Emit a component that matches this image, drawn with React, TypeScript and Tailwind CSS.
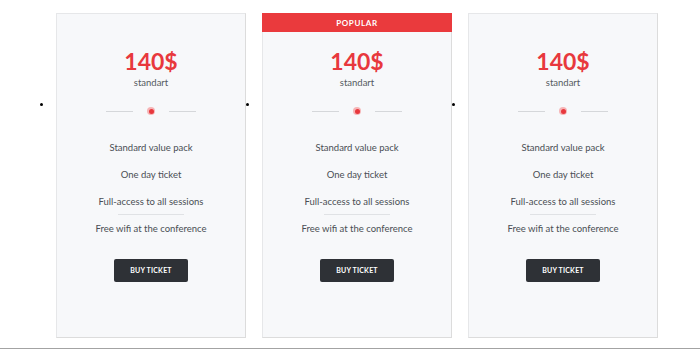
const features = [
  'Standard value pack',
  'One day ticket',
  'Full-access to all sessions',
  'Free wifi at the conference',
]

function PriceCard({ popular }: { popular?: boolean }) {
  return (
    <div className="relative w-[190px] h-[325px] bg-[#f7f8fa] border border-[#e6e7e9] border-r-[#dcdcdc] border-b-[#dcdcdc]">
      <span className="absolute left-[-17px] top-[89px] w-[3px] h-[3px] rounded-full bg-black" />
      {popular && (
        <div className="absolute left-[-1px] right-[-1px] top-[-1px] h-[19px] bg-[#ea3a3d] flex items-center justify-center text-white text-[8px] font-bold tracking-[0.08em]">
          POPULAR
        </div>
      )}
      <div className="flex flex-col items-center pt-[34px]">
        <div className="text-[#e8383d] text-[23px] font-bold leading-[26px]">140$</div>
        <div className="text-[#555a60] text-[9.5px] leading-[14px] mt-[2px]">standart</div>
        <div className="flex items-center gap-[14px] mt-[17px]">
          <span className="w-[27px] h-px bg-[#d5d7da]" />
          <span className="w-[8px] h-[8px] rounded-full bg-[#f6b5b7] flex items-center justify-center">
            <span className="w-[5px] h-[5px] rounded-full bg-[#e8383d]" />
          </span>
          <span className="w-[27px] h-px bg-[#d5d7da]" />
        </div>
        <ul className="flex flex-col items-center mt-[19px] text-[#4a4e54] text-[9.5px]">
          {features.map((f, i) => (
            <li key={f} className="flex flex-col items-center">
              <span className="leading-[27px]">{f}</span>
              {i === 2 && <span className="w-[66px] h-px bg-[#e0e2e5] -mt-[1px]" />}
            </li>
          ))}
        </ul>
        <button className="mt-[17px] w-[74px] h-[23px] rounded-[2px] bg-[#2e3136] text-white text-[7px] font-bold tracking-[0.03em]">
          BUY TICKET
        </button>
      </div>
    </div>
  )
}

export default function App() {
  return (
    <div className="w-[700px] h-[349px] bg-white overflow-hidden flex flex-col" style={{ fontFamily: 'Lato, "Open Sans", sans-serif' }}>
      <div className="flex gap-[16px] pl-[56px] pt-[13px]">
        <PriceCard />
        <PriceCard popular />
        <PriceCard />
      </div>
      <div className="mt-auto h-px bg-[#a3a3a3]" />
    </div>
  )
}
